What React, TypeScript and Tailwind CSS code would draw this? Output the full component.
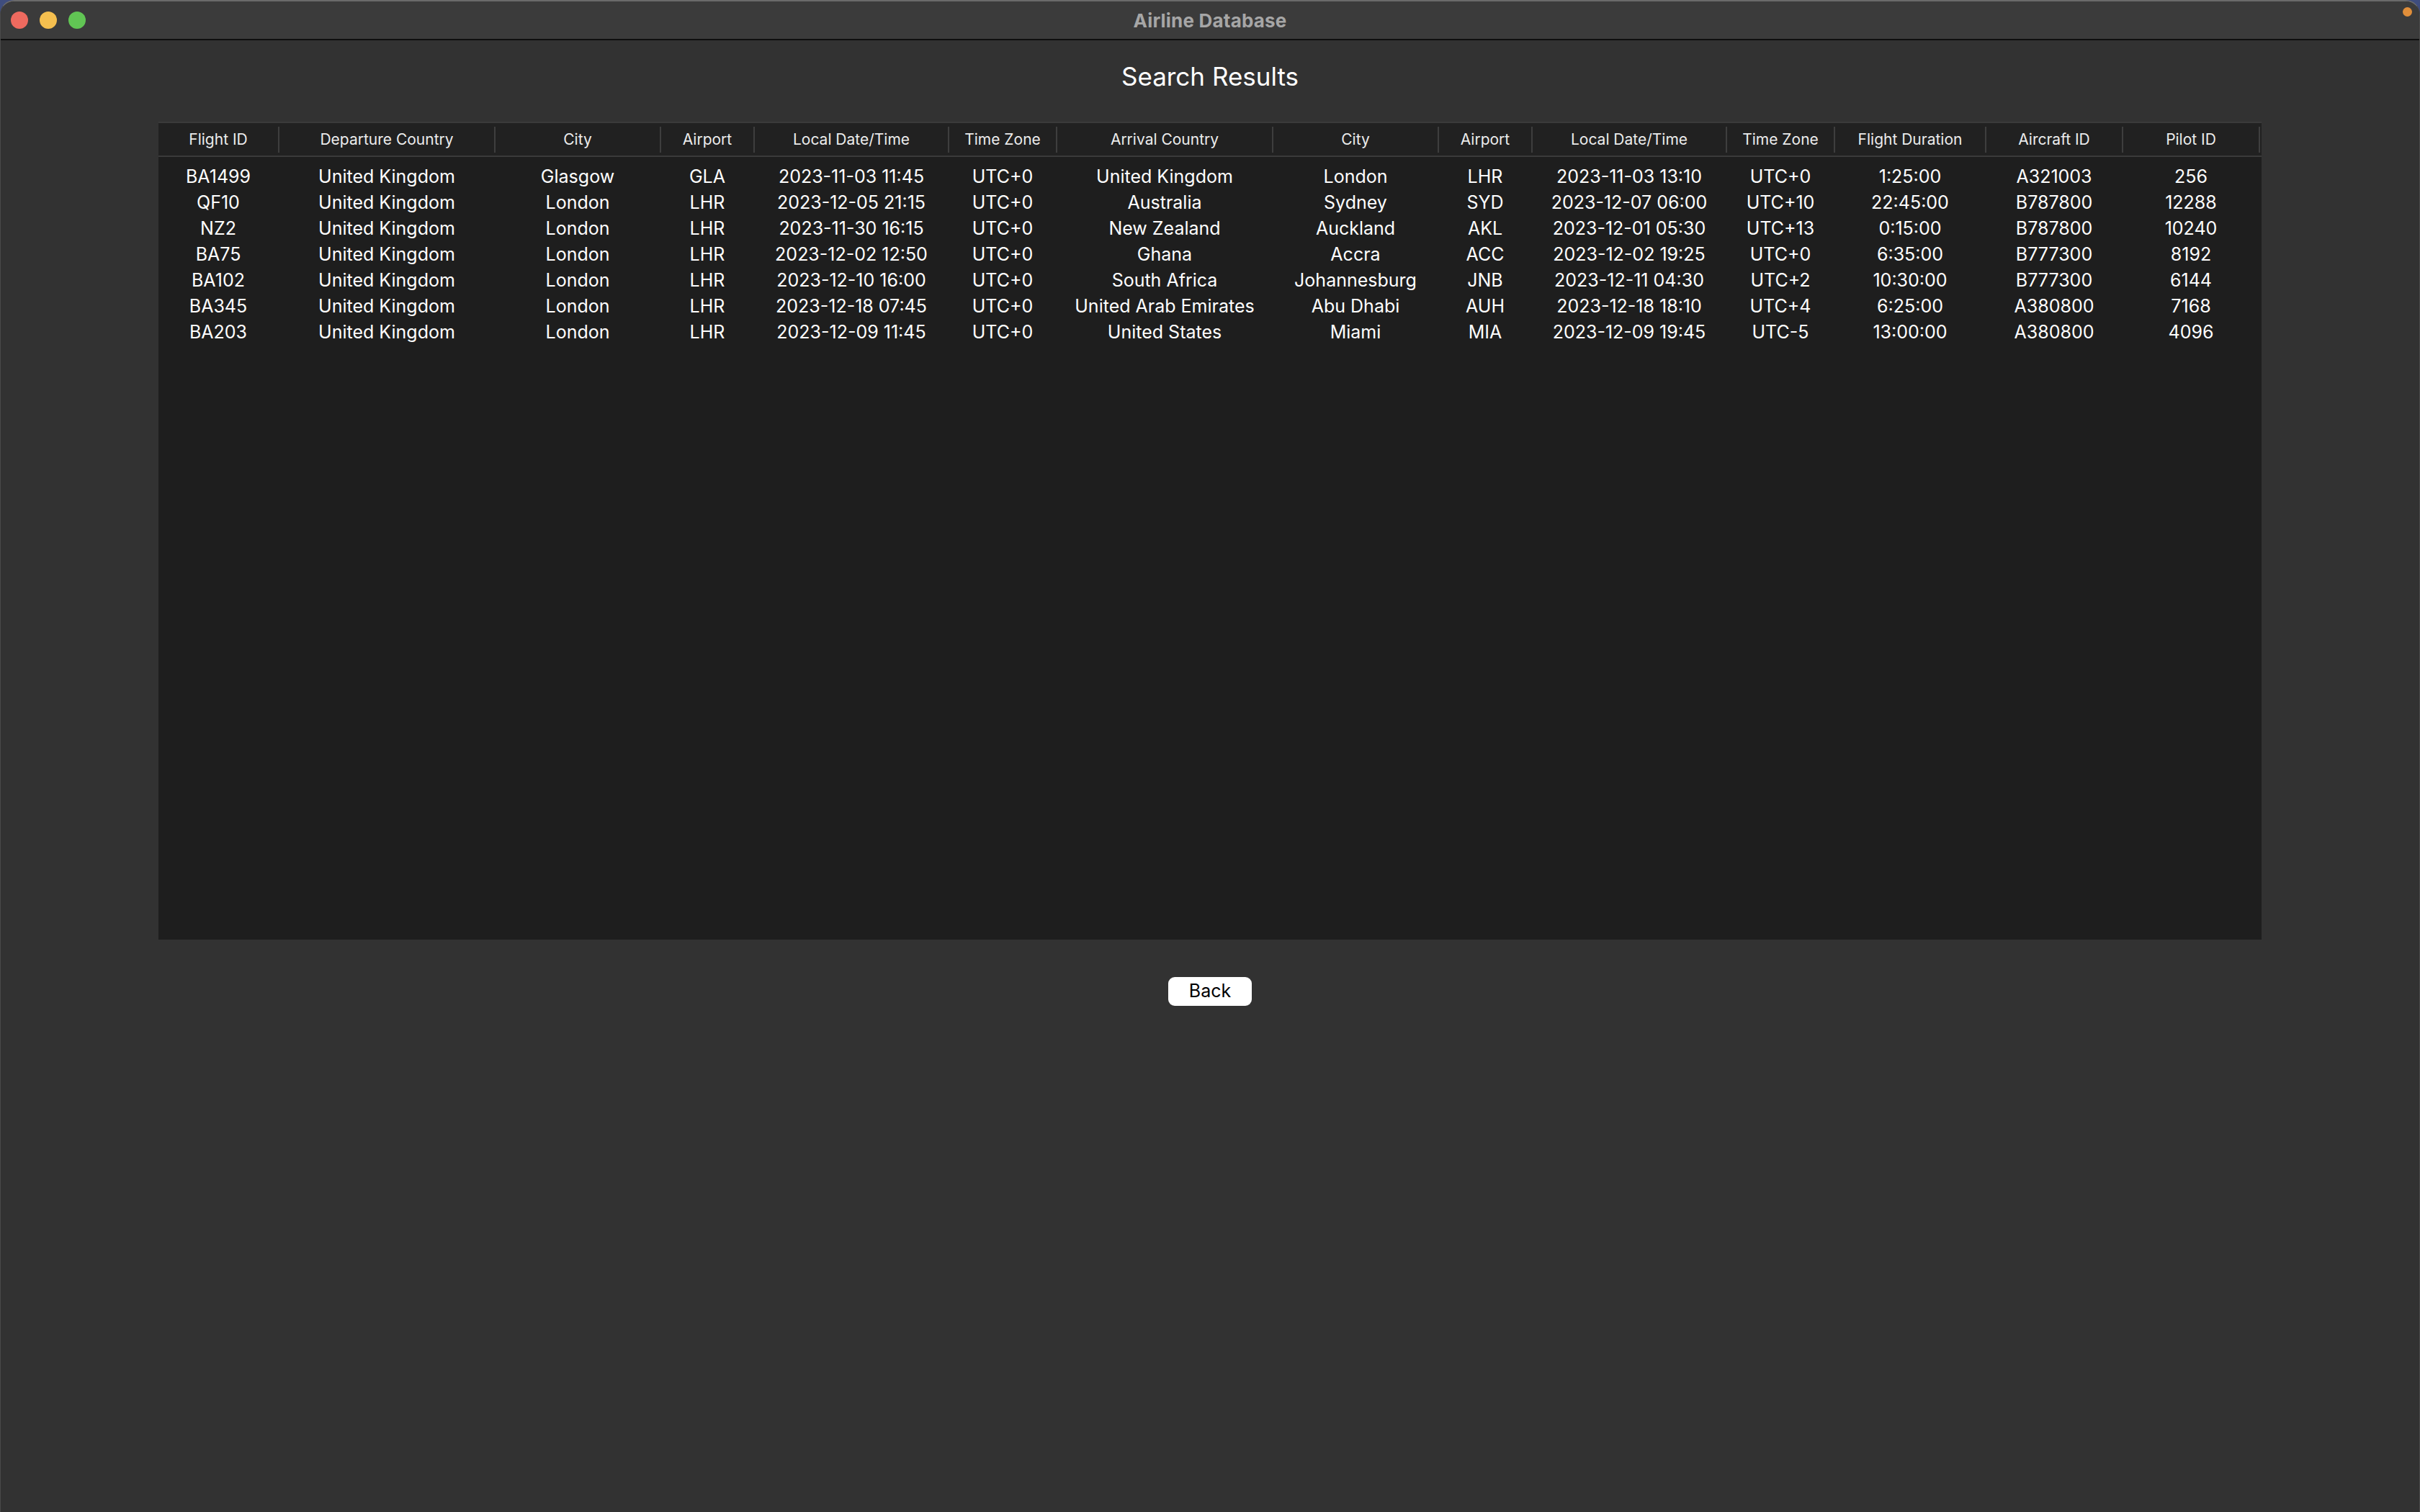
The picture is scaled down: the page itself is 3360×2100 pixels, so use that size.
import React from "react";

const headers = [
  "Flight ID",
  "Departure Country",
  "City",
  "Airport",
  "Local Date/Time",
  "Time Zone",
  "Arrival Country",
  "City",
  "Airport",
  "Local Date/Time",
  "Time Zone",
  "Flight Duration",
  "Aircraft ID",
  "Pilot ID",
];

const rows: string[][] = [
  ["BA1499", "United Kingdom", "Glasgow", "GLA", "2023-11-03 11:45", "UTC+0", "United Kingdom", "London", "LHR", "2023-11-03 13:10", "UTC+0", "1:25:00", "A321003", "256"],
  ["QF10", "United Kingdom", "London", "LHR", "2023-12-05 21:15", "UTC+0", "Australia", "Sydney", "SYD", "2023-12-07 06:00", "UTC+10", "22:45:00", "B787800", "12288"],
  ["NZ2", "United Kingdom", "London", "LHR", "2023-11-30 16:15", "UTC+0", "New Zealand", "Auckland", "AKL", "2023-12-01 05:30", "UTC+13", "0:15:00", "B787800", "10240"],
  ["BA75", "United Kingdom", "London", "LHR", "2023-12-02 12:50", "UTC+0", "Ghana", "Accra", "ACC", "2023-12-02 19:25", "UTC+0", "6:35:00", "B777300", "8192"],
  ["BA102", "United Kingdom", "London", "LHR", "2023-12-10 16:00", "UTC+0", "South Africa", "Johannesburg", "JNB", "2023-12-11 04:30", "UTC+2", "10:30:00", "B777300", "6144"],
  ["BA345", "United Kingdom", "London", "LHR", "2023-12-18 07:45", "UTC+0", "United Arab Emirates", "Abu Dhabi", "AUH", "2023-12-18 18:10", "UTC+4", "6:25:00", "A380800", "7168"],
  ["BA203", "United Kingdom", "London", "LHR", "2023-12-09 11:45", "UTC+0", "United States", "Miami", "MIA", "2023-12-09 19:45", "UTC-5", "13:00:00", "A380800", "4096"],
];

const gridCols =
  "grid grid-cols-[168px_300px_230px_130px_270px_150px_300px_230px_130px_270px_150px_210px_190px_190px]";

export default function App() {
  return (
    <div className="w-[3360px] h-[2100px] bg-[#3f4d7e] overflow-hidden" style={{ fontFamily: "Inter, 'Liberation Sans', Arial, sans-serif" }}>
      <div className="relative w-full h-full flex flex-col rounded-t-[20px] overflow-hidden border-t-2 border-x border-t-[#6a6a6a] border-x-[#4a4a4a] bg-[#323232]">
        {/* Title bar */}
        <div className="relative h-[54px] shrink-0 flex items-center justify-center bg-[#3b3b3b] border-b-2 border-[#0e0e0e]">
          <div className="absolute left-[14px] top-[14px] flex gap-[16px]">
            <div className="w-[24px] h-[24px] rounded-full bg-[#ee6a5f]" />
            <div className="w-[24px] h-[24px] rounded-full bg-[#f5bf4f]" />
            <div className="w-[24px] h-[24px] rounded-full bg-[#61c554]" />
          </div>
          <span className="text-[26px] font-bold text-[#a6a6a6] tracking-[0.2px]">Airline Database</span>
          <div className="absolute right-[10px] top-[8px] w-[13px] h-[13px] rounded-full bg-[#e08e3a]" />
        </div>

        {/* Content */}
        <div className="flex flex-col items-center pt-[28px]">
          <h1 className="text-[35px] leading-[44px] text-white font-normal">Search Results</h1>

          <div className="mt-[41px] w-[2920px] h-[1136px] bg-[#1e1e1e] flex flex-col">
            <div className={`${gridCols} h-[49px] bg-[#212121] border-y-2 border-[#3a3a3a]`}>
              {headers.map((h, i) => (
                <div key={i} className="flex items-center">
                  <span className="flex-1 text-center text-[21px] text-[#ececec]">{h}</span>
                  <div className="w-[2px] h-[36px] bg-[#3e3e3e]" />
                </div>
              ))}
            </div>
            <div className="pt-[9px] flex flex-col">
              {rows.map((r, ri) => (
                <div key={ri} className={`${gridCols} h-[36px]`}>
                  {r.map((c, ci) => (
                    <div key={ci} className="flex items-center justify-center pr-[2px] text-[25px] text-white whitespace-nowrap">
                      {c}
                    </div>
                  ))}
                </div>
              ))}
            </div>
          </div>

          <button className="mt-[52px] w-[116px] h-[40px] rounded-[9px] bg-white text-black text-[25px] flex items-center justify-center">
            Back
          </button>
        </div>
      </div>
    </div>
  );
}
